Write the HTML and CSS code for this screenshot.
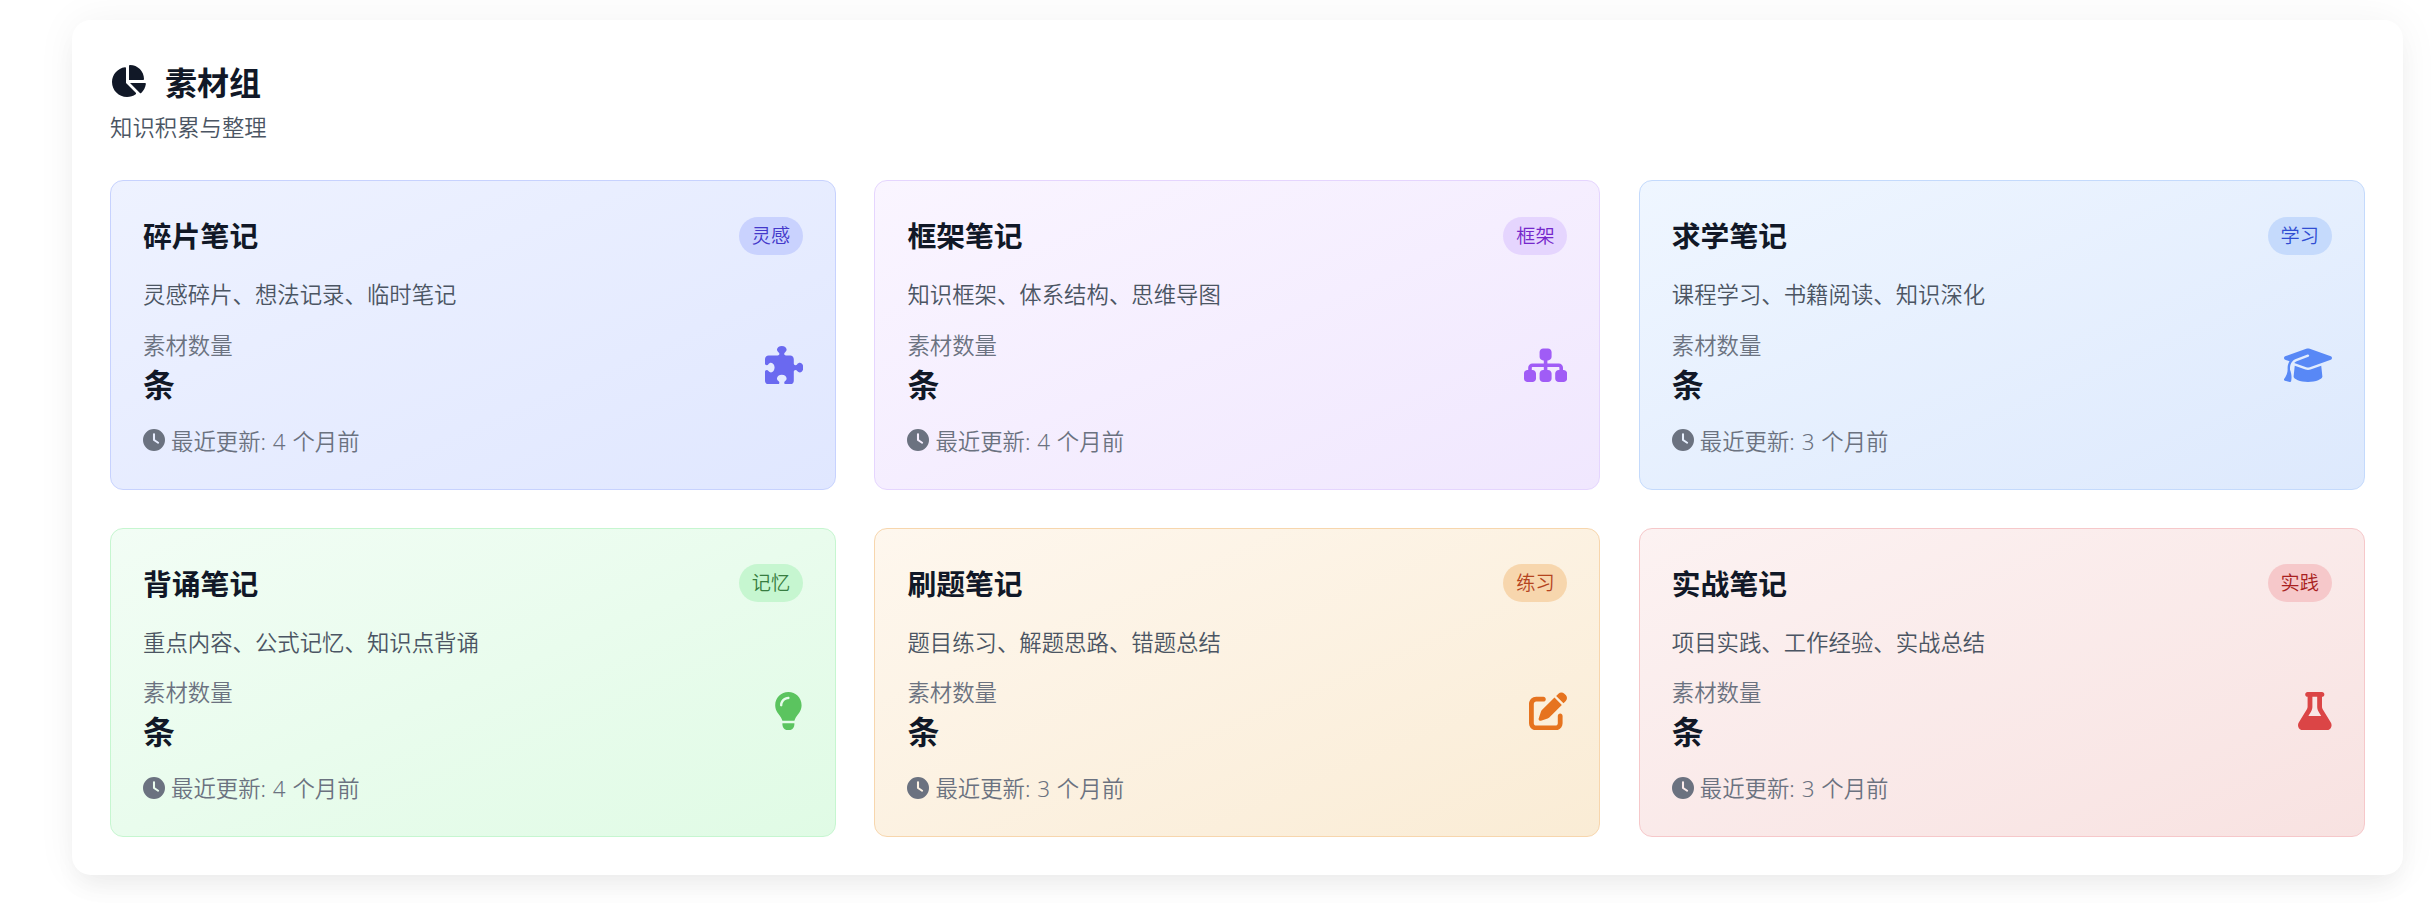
FILE: index.html
```html
<!DOCTYPE html>
<html lang="zh-CN">
<head>
<meta charset="utf-8">
<title>素材组</title>
<link rel="stylesheet" href="styles.css">
</head>
<body>
<svg class="sprite" aria-hidden="true">
<symbol id="clock" viewBox="0 0 512 512"><path d="M256 0a256 256 0 1 1 0 512A256 256 0 1 1 256 0zM232 120V256c0 8 4 15.5 10.7 20l96 64c11 7.4 25.9 4.4 33.3-6.7s4.4-25.9-6.7-33.3L280 243.2V120c0-13.3-10.7-24-24-24s-24 10.7-24 24z"/></symbol>
</svg>
<main class="panel">
<header class="head">
<h2 class="heading"><svg class="heading-icon" viewBox="0 0 576 512"><path d="M304 240V16.6c0-9 7-16.6 16-16.6C443.7 0 544 100.3 544 224c0 9-7.6 16-16.6 16H304zM32 272C32 150.7 122.1 50.3 239 34.3c9.2-1.3 17 6.1 17 15.4V288L412.5 444.5c6.7 6.7 6.2 17.7-1.5 23.1C371.8 495.6 323.8 512 272 512C139.5 512 32 404.6 32 272zm526.4 16c9.3 0 16.6 7.8 15.4 17c-7.7 55.9-34.6 105.6-73.9 142.3c-6 5.6-15.4 5.2-21.2-.7L320 288H558.4z"/></svg><span class="heading-text">素材组</span></h2>
<p class="sub">知识积累与整理</p>
</header>
<section class="grid">
<article class="card indigo">
<div class="top"><h3 class="title">碎片笔记</h3><span class="badge">灵感</span></div>
<p class="desc">灵感碎片、想法记录、临时笔记</p>
<div class="stat"><div><p class="label">素材数量</p><p class="count">条</p></div>
<svg class="icon" viewBox="0 0 512 512"><path d="M192 104.8c0-9.2-5.8-17.3-13.2-22.8C167.2 73.3 160 61.3 160 48c0-26.5 28.7-48 64-48s64 21.5 64 48c0 13.3-7.2 25.3-18.8 34c-7.4 5.5-13.2 13.6-13.2 22.8v0c0 12.8 10.4 23.2 23.2 23.2H336c26.5 0 48 21.5 48 48v56.8c0 12.8 10.4 23.2 23.2 23.2v0c9.2 0 17.3-5.8 22.8-13.2c8.7-11.6 20.7-18.8 34-18.8c26.5 0 48 28.7 48 64s-21.5 64-48 64c-13.3 0-25.3-7.2-34-18.8c-5.5-7.4-13.6-13.2-22.8-13.2v0c-12.8 0-23.2 10.4-23.2 23.2V464c0 26.5-21.5 48-48 48H279.2c-12.8 0-23.2-10.4-23.2-23.2v0c0-9.2 5.8-17.3 13.2-22.8c11.6-8.7 18.8-20.7 18.8-34c0-26.5-28.7-48-64-48s-64 21.5-64 48c0 13.3 7.2 25.3 18.8 34c7.4 5.5 13.2 13.6 13.2 22.8v0c0 12.8-10.4 23.2-23.2 23.2H48c-26.5 0-48-21.5-48-48V343.2C0 330.4 10.4 320 23.2 320v0c9.2 0 17.3 5.8 22.8 13.2C54.7 344.8 66.7 352 80 352c26.5 0 48-28.7 48-64s-21.5-64-48-64c-13.3 0-25.3 7.2-34 18.8C40.5 250.2 32.4 256 23.2 256v0C10.4 256 0 245.6 0 232.8V176c0-26.5 21.5-48 48-48H168.8c12.8 0 23.2-10.4 23.2-23.2v0z"/></svg></div>
<p class="updated"><svg class="clock"><use href="#clock"/></svg><span class="when">最近更新: 4 个月前</span></p>
</article>
<article class="card purple">
<div class="top"><h3 class="title">框架笔记</h3><span class="badge">框架</span></div>
<p class="desc">知识框架、体系结构、思维导图</p>
<div class="stat"><div><p class="label">素材数量</p><p class="count">条</p></div>
<svg class="icon" viewBox="0 0 576 512"><path d="M208 80c0-26.5 21.5-48 48-48h64c26.5 0 48 21.5 48 48v64c0 26.5-21.5 48-48 48h-8v40H464c30.9 0 56 25.1 56 56v32h8c26.5 0 48 21.5 48 48v64c0 26.5-21.5 48-48 48H464c-26.5 0-48-21.5-48-48V368c0-26.5 21.5-48 48-48h8V288c0-4.4-3.6-8-8-8H312v40h8c26.5 0 48 21.5 48 48v64c0 26.5-21.5 48-48 48H256c-26.5 0-48-21.5-48-48V368c0-26.5 21.5-48 48-48h8V280H112c-4.4 0-8 3.6-8 8v32h8c26.5 0 48 21.5 48 48v64c0 26.5-21.5 48-48 48H48c-26.5 0-48-21.5-48-48V368c0-26.5 21.5-48 48-48h8V288c0-30.9 25.1-56 56-56H264V192h-8c-26.5 0-48-21.5-48-48V80z"/></svg></div>
<p class="updated"><svg class="clock"><use href="#clock"/></svg><span class="when">最近更新: 4 个月前</span></p>
</article>
<article class="card blue">
<div class="top"><h3 class="title">求学笔记</h3><span class="badge">学习</span></div>
<p class="desc">课程学习、书籍阅读、知识深化</p>
<div class="stat"><div><p class="label">素材数量</p><p class="count">条</p></div>
<svg class="icon" viewBox="0 0 640 512"><path d="M320 32c-8.1 0-16.1 1.4-23.7 4.1L15.8 137.4C6.3 140.9 0 149.9 0 160s6.3 19.1 15.8 22.6l57.9 20.9C57.3 229.3 48 259.8 48 291.9v28.1c0 28.4-10.8 57.7-22.3 80.8c-6.5 13-13.9 25.8-22.5 37.6C0 442.7-.9 448.3 .9 453.4s6 8.9 11.2 10.2l64 16c4.2 1.1 8.7 .3 12.4-2s6.3-6.1 7.1-10.4c8.6-42.8 4.3-81.2-2.1-108.7C90.3 344.3 86 329.8 80 316.5V291.9c0-30.2 10.2-58.7 27.9-81.5c12.9-15.5 29.6-28 49.2-35.7l157-61.7c8.2-3.2 17.5 .8 20.7 9s-.8 17.5-9 20.7l-157 61.7c-12.4 4.9-23.3 12.4-32.2 21.6l159.6 57.6c7.6 2.7 15.6 4.1 23.7 4.1s16.1-1.4 23.7-4.1L624.2 182.6c9.5-3.4 15.8-12.5 15.8-22.6s-6.3-19.1-15.8-22.6L343.7 36.1C336.1 33.4 328.1 32 320 32zM128 408c0 35.3 86 72 192 72s192-36.7 192-72L496.7 262.6 354.5 314c-11.1 4-22.8 6-34.5 6s-23.5-2-34.5-6L143.3 262.6 128 408z"/></svg></div>
<p class="updated"><svg class="clock"><use href="#clock"/></svg><span class="when">最近更新: 3 个月前</span></p>
</article>
<article class="card green">
<div class="top"><h3 class="title">背诵笔记</h3><span class="badge">记忆</span></div>
<p class="desc">重点内容、公式记忆、知识点背诵</p>
<div class="stat"><div><p class="label">素材数量</p><p class="count">条</p></div>
<svg class="icon" viewBox="0 0 384 512"><path d="M272 384c9.6-31.9 29.5-59.1 49.2-86.2l0 0c5.2-7.1 10.4-14.2 15.4-21.4c19.8-28.5 31.4-63 31.4-100.3C368 78.8 289.2 0 192 0S16 78.8 16 176c0 37.3 11.6 71.9 31.4 100.3c5 7.2 10.2 14.3 15.4 21.4l0 0c19.8 27.1 39.7 54.4 49.2 86.2H272zM192 512c44.2 0 80-35.8 80-80V416H112v16c0 44.2 35.8 80 80 80zM112 176c0 8.8-7.2 16-16 16s-16-7.2-16-16c0-61.9 50.1-112 112-112c8.8 0 16 7.2 16 16s-7.2 16-16 16c-44.2 0-80 35.8-80 80z"/></svg></div>
<p class="updated"><svg class="clock"><use href="#clock"/></svg><span class="when">最近更新: 4 个月前</span></p>
</article>
<article class="card orange">
<div class="top"><h3 class="title">刷题笔记</h3><span class="badge">练习</span></div>
<p class="desc">题目练习、解题思路、错题总结</p>
<div class="stat"><div><p class="label">素材数量</p><p class="count">条</p></div>
<svg class="icon" viewBox="0 0 512 512"><path d="M471.6 21.7c-21.9-21.9-57.3-21.9-79.2 0L362.3 51.7l97.9 97.9 30.1-30.1c21.9-21.9 21.9-57.3 0-79.2L471.6 21.7zm-299.2 220c-6.1 6.1-10.8 13.6-13.5 21.9l-29.6 88.8c-2.9 8.6-.6 18.1 5.8 24.6s15.9 8.7 24.6 5.8l88.8-29.6c8.2-2.7 15.7-7.4 21.9-13.5L437.7 172.3 339.7 74.3 172.4 241.7zM96 64C43 64 0 107 0 160V416c0 53 43 96 96 96H352c53 0 96-43 96-96V320c0-17.7-14.3-32-32-32s-32 14.3-32 32v96c0 17.7-14.3 32-32 32H96c-17.7 0-32-14.3-32-32V160c0-17.7 14.3-32 32-32h96c17.7 0 32-14.3 32-32s-14.3-32-32-32H96z"/></svg></div>
<p class="updated"><svg class="clock"><use href="#clock"/></svg><span class="when">最近更新: 3 个月前</span></p>
</article>
<article class="card red">
<div class="top"><h3 class="title">实战笔记</h3><span class="badge">实践</span></div>
<p class="desc">项目实践、工作经验、实战总结</p>
<div class="stat"><div><p class="label">素材数量</p><p class="count">条</p></div>
<svg class="icon" viewBox="0 0 448 512"><path d="M288 0H160 128C110.3 0 96 14.3 96 32s14.3 32 32 32V196.8c0 11.8-3.3 23.5-9.5 33.5L10.3 406.2C3.6 417.2 0 429.7 0 442.6C0 480.9 31.1 512 69.4 512H378.6c38.3 0 69.4-31.1 69.4-69.4c0-12.8-3.6-25.4-10.3-36.4L329.5 230.4c-6.2-10.1-9.5-21.7-9.5-33.5V64c17.7 0 32-14.3 32-32s-14.3-32-32-32H288zM192 196.8V64h64V196.8c0 23.7 6.6 46.9 19 67.1L309.5 320h-171L173 263.9c12.4-20.2 19-43.4 19-67.1z"/></svg></div>
<p class="updated"><svg class="clock"><use href="#clock"/></svg><span class="when">最近更新: 3 个月前</span></p>
</article>
</section>
</main>
</body>
</html>
```
FILE: styles.css
```css
* { box-sizing: border-box; margin: 0; padding: 0; }
body {
  background: #fff;
  padding: 20px 30px 0 72px;
  height: 912px;
  overflow: hidden;
  font-family: "Noto Sans", "Noto Sans CJK SC", sans-serif;
  font-weight: 350;
  color: #111827;
}
svg { fill: currentColor; flex: none; }
.sprite { display: none; }
.panel {
  height: 855px;
  padding: 38px;
  border-radius: 19px;
  background: #fff;
  box-shadow: 0 16px 24px -5px rgba(0,0,0,.05), 0 0 40px rgba(0,0,0,.05);
}
.heading { display: flex; align-items: center; gap: 19px; height: 45px; font-size: 32px; font-weight: 700; line-height: 45px; }
.heading-text { padding-top: 3px; }
.heading-icon { width: 36px; height: 32px; }
.sub { padding-top: 9px; height: 39px; line-height: 32px; font-size: 22.4px; color: #4b5563; }
.grid { display: grid; grid-template-columns: repeat(3, 726px); grid-template-rows: 310px 309px; gap: 38px 38.4px; margin-top: 38px; }
.card { padding: 32px; border: 1px solid; border-radius: 13px; }
.top { display: flex; justify-content: space-between; align-items: center; height: 45px; }
.title { font-size: 28.8px; font-weight: 700; line-height: 45px; }
.badge { height: 38px; padding: 0 12.8px; border-radius: 19px; font-size: 19.2px; line-height: 38px; }
.desc { margin-top: 21px; font-size: 22.4px; line-height: 32px; color: #4b5563; }
.stat { display: flex; justify-content: space-between; align-items: flex-start; height: 77px; margin-top: 19px; }
.label { font-size: 22.4px; line-height: 32px; color: #6b7280; }
.count { font-size: 32px; line-height: 45px; font-weight: 700; }
.icon { height: 38.4px; margin-top: 16px; }
.updated { display: flex; align-items: flex-start; gap: 6px; height: 32px; margin-top: 19px; font-size: 22.4px; line-height: 32px; color: #6b7280; }
.when { word-spacing: 1px; }
.clock { width: 22px; height: 22px; margin-top: 3px; }
.green .desc, .orange .desc, .red .desc { margin-bottom: -1px; }
.green .icon, .orange .icon, .red .icon { margin-top: 15px; }
.green .badge, .orange .badge, .red .badge { margin-top: -2px; }
.green .clock, .orange .clock, .red .clock { margin-top: 4px; }

.indigo { background: linear-gradient(to bottom right, #eef2ff, #e0e7ff); border-color: #c7d2fe; }
.indigo .badge { background: #c9d2fe; color: #4338ca; }
.indigo .icon { color: #6a69f0; }
.purple { background: linear-gradient(to bottom right, #faf5ff, #f0e7fe); border-color: #e5d5fe; }
.purple .badge { background: #e5d5fe; color: #7527cb; }
.purple .icon { color: #a05cf6; }
.blue { background: linear-gradient(to bottom right, #eff6ff, #dde9fd); border-color: #c4dafc; }
.blue .badge { background: #c5dafc; color: #304dd2; }
.blue .icon { color: #5888f6; }
.green { background: linear-gradient(to bottom right, #f2fdf5, #e0fbe5); border-color: #c6f6d0; }
.green .badge { background: #c6f6d0; color: #377d40; }
.green .icon { color: #5bc45f; }
.orange { background: linear-gradient(to bottom right, #fef7ee, #faecd5); border-color: #f7d6ad; }
.orange .badge { background: #f7d6ad; color: #b5441e; }
.orange .icon { color: #e6731f; }
.red { background: linear-gradient(to bottom right, #fcf2f2, #f8e2e1); border-color: #f6c8ca; }
.red .badge { background: #f6c8ca; color: #a91f21; }
.red .icon { color: #db4546; }
```
